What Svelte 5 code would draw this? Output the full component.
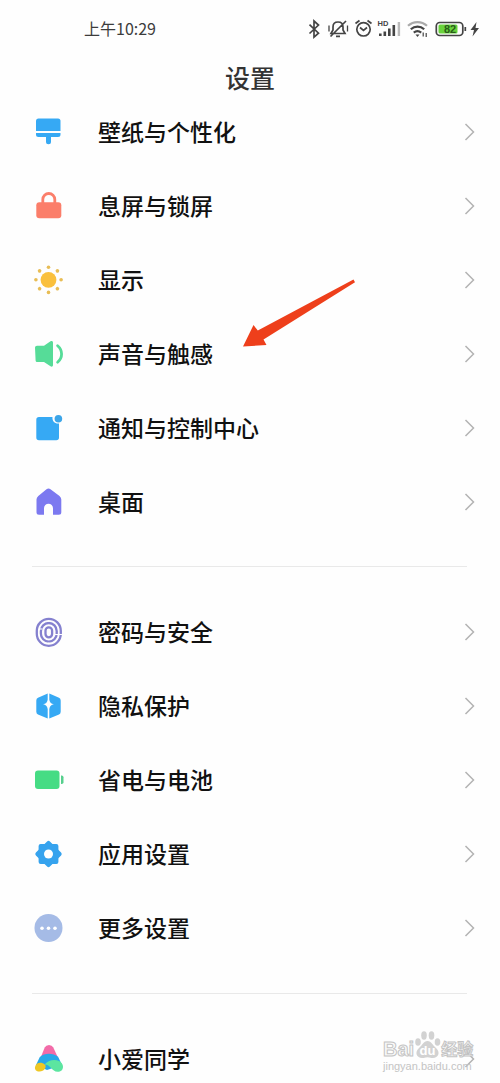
<script>
  const groups = [
    [
      { icon: 'brush', label: '壁纸与个性化' },
      { icon: 'lock', label: '息屏与锁屏' },
      { icon: 'sun', label: '显示' },
      { icon: 'sound', label: '声音与触感' },
      { icon: 'notice', label: '通知与控制中心' },
      { icon: 'home', label: '桌面' },
    ],
    [
      { icon: 'finger', label: '密码与安全' },
      { icon: 'privacy', label: '隐私保护' },
      { icon: 'battery', label: '省电与电池' },
      { icon: 'gear', label: '应用设置' },
      { icon: 'more', label: '更多设置' },
    ],
    [{ icon: 'assistant', label: '小爱同学' }],
  ];

  const rays = [0, 45, 90, 135, 180, 225, 270, 315];
</script>

<div class="screen">
  <header class="status">
    <span class="time">上午10:29</span>
    <svg class="status-icons" width="172" height="22" viewBox="0 0 172 22" fill="none" stroke="#444" stroke-width="1.7">
      <!-- bluetooth -->
      <path d="M1.500 6.700l9 8.500-4.500 4V3l4.500 4-9 8.500" />
      <!-- muted bell -->
      <path d="M23 15.500h14l-2-3.500V9c0-3-2-5-5-5s-5 2-5 5v3zM28 18.300h4M38 3L22.500 18.500" />
      <path d="M21 7.500v6M39.500 7.500v6" stroke-width="1.300" />
      <!-- alarm -->
      <circle cx="55.500" cy="11.300" r="6.700" />
      <path d="M52 9.500l3.500 3 3.500-3M47.500 5.500l4-3M63.500 5.500l-4-3" />
      <!-- signal -->
      <g stroke="none" fill="#444">
        <text class="hd" x="69.500" y="7.500">HD</text>
        <rect x="71" y="15.500" width="2.600" height="2.500" />
        <rect x="75.500" y="13.500" width="2.600" height="4.500" />
        <rect x="80" y="10.500" width="2.600" height="7.500" />
        <rect x="84.500" y="7" width="2.600" height="11" />
        <rect x="89.700" y="4" width="2.400" height="14" fill="#bbb" />
      </g>
      <!-- wifi -->
      <path d="M100 7.800c5.500-5 13.500-5 19 0" stroke="#aaa" stroke-width="2.200" />
      <path d="M102.800 11.300c4-3.600 9.500-3.600 13.400 0M105.800 14.700c2.300-2 5-2 7.400 0" stroke-width="2.200" />
      <path d="M107.500 16.500h4l-2 2.500z" fill="#444" stroke="none" />
      <path d="M115.200 14.500v4M118.200 15v4" stroke-width="1.200" />
      <!-- battery -->
      <rect x="128.300" y="4.500" width="26.500" height="13" rx="3.500" />
      <rect x="130.500" y="6.500" width="19" height="9" rx="1.500" fill="#69d33c" stroke="none" />
      <path d="M157.300 9v4" />
      <text class="level" x="142" y="15" text-anchor="middle">82</text>
      <path d="M168.500 4l-6 8h3.500l-1.500 6.500 6.500-8.500h-3.500z" fill="#444" stroke="none" />
    </svg>
  </header>

  <h1>设置</h1>

  <main>
    {#each groups as group}
      <section>
        {#each group as item}
          <div class="row">
            <svg class="icon" width="36" height="36" viewBox="0 0 36 36">
              {#if item.icon === 'brush'}
                <g fill="#36a9f4">
                  <path d="M8.500 4.500h19.500a2.500 2.500 0 0 1 2.500 2.500v10h-24.500V7a2.500 2.500 0 0 1 2.500-2.500z" />
                  <path d="M6 19h24.500v1.500a2.500 2.500 0 0 1-2.500 2.500h-7v4.800a2.500 2.500 0 0 1-5 0V23H8.500A2.500 2.500 0 0 1 6 20.500z" />
                </g>
              {:else if item.icon === 'lock'}
                <rect x="6.300" y="14.200" width="25" height="16" rx="3" fill="#fb7e6a" />
                <path d="M12.800 16v-4.500a6 6 0 0 1 12 0V16" fill="none" stroke="#fb7e6a" stroke-width="2.800" />
              {:else if item.icon === 'sun'}
                <circle cx="18.500" cy="17.800" r="7.900" fill="#fac03c" />
                {#each rays as angle}
                  <circle cx="18.500" cy="5.200" r="1.800" fill="#e8bd55" transform="rotate({angle} 18.500 17.800)" />
                {/each}
              {:else if item.icon === 'sound'}
                <path d="M7 9.800h7l6.500-4.500c1.200-.8 2.500-.3 2.500 1.200v22.600c0 1.500-1.300 2-2.500 1.200L14 26H7q-1.300 0-1.400-1.500L5 11.500Q5 9.800 7 9.800z" fill="#56dc98" />
                <path d="M27.600 9.700c5.300 4.500 5.300 12 0 16.500" fill="none" stroke="#56dc98" stroke-width="2.800" stroke-linecap="round" />
              {:else if item.icon === 'notice'}
                <path d="M9 7h13.500c-.6 4 2.500 7 6.500 6.500v14a2.700 2.700 0 0 1-2.700 2.700H9A2.700 2.700 0 0 1 6.300 27.500V9.700A2.700 2.700 0 0 1 9 7z" fill="#36a9f4" />
                <circle cx="28.400" cy="8.700" r="3.800" fill="#3ca5e8" />
              {:else if item.icon === 'home'}
                <path d="M16.500 5.200q2-1.400 4 0l9 6.700q1.800 1.500 1.800 3.500v12.800q0 2.500-2.500 2.500H23v-6.500a4.500 4.500 0 0 0-9 0v6.500H9q-2.500 0-2.500-2.500V15.400q0-2 1.800-3.500z" fill="#7c79f0" />
              {:else if item.icon === 'finger'}
                <g fill="none" stroke="#8581cf" stroke-width="2.300">
                  <rect x="6.800" y="4.800" width="24" height="27" rx="12" />
                  <rect x="10.900" y="9" width="15.800" height="18.600" rx="7.900" />
                  <rect x="15.500" y="13.300" width="6.600" height="10" rx="3.300" />
                </g>
                <path d="M9 15h3.500M25 20.500h7M18.200 7.500h1.200M18.200 29.200h1.200" stroke="#fff" stroke-width="1.200" />
              {:else if item.icon === 'privacy'}
                <path d="M17.700 5.500v6.200c-.6 2.800-1.800 4-4.600 4.600 2.800.6 4 1.800 4.600 4.600v9.600L8 26.500q-1.700-.8-1.700-2.700V12.500q0-1.900 1.700-2.700z" fill="#36a9f4" />
                <path d="M19.300 5.500v6.200c.6 2.800 1.800 4 4.600 4.600-2.800.6-4 1.800-4.600 4.600v9.600l9.700-4q1.700-.8 1.700-2.700V12.500q0-1.900-1.700-2.700z" fill="#36a9f4" />
              {:else if item.icon === 'battery'}
                <rect x="5" y="8.500" width="24.500" height="18.500" rx="3" fill="#46dc84" />
                <path d="M31 13.500h.7q1.800 0 1.800 1.800v5q0 1.800-1.800 1.800H31z" fill="#56cf8d" />
              {:else if item.icon === 'gear'}
                <g fill="#36a3ee">
                  <rect x="8.600" y="8.100" width="19.800" height="19.800" rx="2" />
                  <rect x="8.600" y="8.100" width="19.800" height="19.800" rx="2" transform="rotate(45 18.500 18)" />
                </g>
                <circle cx="18.500" cy="18" r="4.500" fill="#fff" />
              {:else if item.icon === 'more'}
                <circle cx="18.500" cy="18" r="14" fill="#a5bbe6" />
                <g fill="#fff">
                  <circle cx="12" cy="18.200" r="1.800" />
                  <circle cx="18.500" cy="18.200" r="1.800" />
                  <circle cx="25" cy="18.200" r="1.800" />
                </g>
              {:else}
                <path d="M9.500 19.500l5.200-13q1.300-2.500 4.300-2.500t4.300 2.500l6 13-7 2z" fill="#f26ba8" />
                <path d="M6 24l3.800-8c5-4.500 13-4.300 18.300-.3L32 24l-15 5z" fill="#27a8e8" />
                <path d="M5 26c1.300-5 6.500-5.200 10-2.300 2 2-.8 6.800-5.500 6.800-3.500 0-5-2-4.500-4.500z" fill="#eec724" />
                <path d="M14.500 23.500c4.500-5 10.500-5.200 14.500-3.500 2.500 1 4 3.500 4 5.700 0 3-2 5-5.500 5-5.500 0-7-7.200-13-7.200z" fill="#5ce5a0" />
              {/if}
            </svg>
            <span class="label">{item.label}</span>
            <svg class="chevron" width="12" height="20" viewBox="0 0 12 20">
              <path d="M1.500 2l8 8-8 8" />
            </svg>
          </div>
        {/each}
      </section>
    {/each}
  </main>

  <svg class="pointer" width="114" height="70" viewBox="0 0 114 70">
    <path d="M111.500 .5l1.500 2.800L21.500 60.500l3 5.500L1 67.500 11.500 46l4.300 5.500z" />
  </svg>

  <div class="watermark">
    <div class="brand">
      <span class="bai">Bai</span>
      <svg width="27" height="30" viewBox="0 0 27 30">
        <g fill="#d2d2d2">
          <ellipse cx="4" cy="12" rx="2.800" ry="3.800" />
          <ellipse cx="10" cy="5.500" rx="2.800" ry="4.200" />
          <ellipse cx="17.500" cy="5.500" rx="2.800" ry="4.200" />
          <ellipse cx="23.500" cy="12" rx="2.800" ry="3.800" />
          <path d="M13.500 11c4 0 5 4 8.500 7 5 4.500 2 10-3 10-2.500 0-3-.8-5.500-.8S10.500 28 8 28c-5 0-8-5.500-3-10 3.500-3 4.500-7 8.500-7z" />
        </g>
        <text class="du" x="13.500" y="25" text-anchor="middle">du</text>
      </svg>
      <span class="exp">经验</span>
    </div>
    <div class="site">jingyan.baidu.com</div>
  </div>
</div>

<style>
  :global(body) {
    margin: 0;
    background: #fefefe;
  }

  .screen {
    position: relative;
    width: 500px;
    height: 1083px;
    overflow: hidden;
    background: #fefefe;
    font-family: 'Noto Sans CJK SC', sans-serif;
  }

  .status {
    display: flex;
    align-items: center;
    justify-content: space-between;
    height: 58px;
    padding: 0 20px 0 84px;
    box-sizing: border-box;
  }

  .time {
    padding-bottom: 2px;
    font-size: 16px;
    color: #3c3c3c;
  }

  .hd {
    font: 700 7.5px 'Liberation Sans', sans-serif;
  }

  .level {
    font: 700 11px 'Liberation Sans', sans-serif;
    fill: #285c18;
    stroke: none;
  }

  h1 {
    height: 36.5px;
    margin: 0;
    font-size: 25px;
    font-weight: 500;
    line-height: 38px;
    text-align: center;
    color: #333;
  }

  section + section {
    margin-top: 27px;
    padding-top: 29px;
    background: linear-gradient(#e9e9e9, #e9e9e9) 32px 0 / 435px 1px no-repeat;
  }

  .row {
    display: flex;
    align-items: center;
    height: 74.1px;
    padding: 0 24px 0 30px;
  }

  .icon {
    flex: none;
  }

  .label {
    flex: 1;
    margin-left: 32px;
    padding-bottom: 2px;
    font-size: 23px;
    font-weight: 500;
    line-height: 34px;
    color: #111;
  }

  .chevron path {
    fill: none;
    stroke: #b3b3b3;
    stroke-width: 1.5;
  }

  .pointer {
    position: absolute;
    left: 242px;
    top: 278.5px;
    fill: #ee3f1b;
  }

  .watermark {
    position: absolute;
    right: 24px;
    top: 1028px;
    width: 93px;
    color: #fafafa;
  }

  .brand {
    display: flex;
    align-items: flex-end;
    height: 32px;
    -webkit-text-stroke: 1px #c4c4c4;
  }

  .bai {
    font: 700 20px/22px 'Liberation Sans', sans-serif;
  }

  .du {
    font: 700 13px 'Liberation Sans', sans-serif;
    fill: #fff;
    -webkit-text-stroke: 0;
  }

  .exp {
    font-size: 16px;
    font-weight: 700;
    line-height: 24px;
  }

  .site {
    font: 11px/12px 'Liberation Sans', sans-serif;
    color: #c4c4c4;
  }
</style>
